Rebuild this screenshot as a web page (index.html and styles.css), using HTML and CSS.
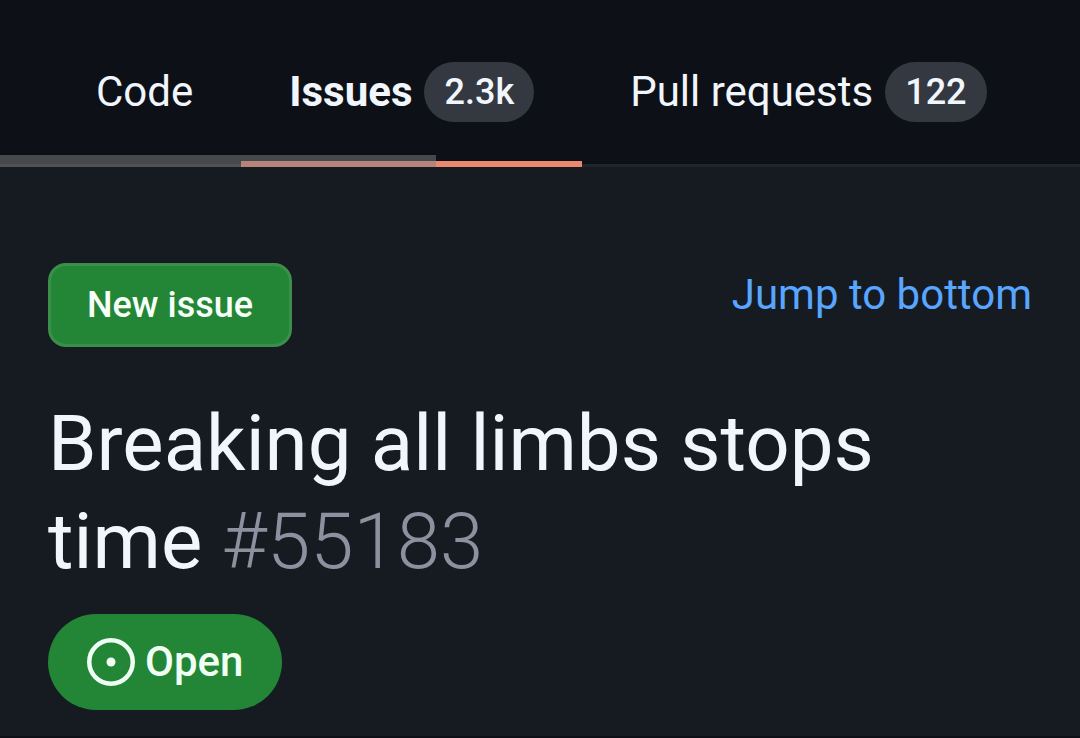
FILE: index.html
```html
<!DOCTYPE html>
<html lang="en">
<head>
  <meta charset="UTF-8" />
  <meta name="viewport" content="width=device-width, initial-scale=1.0" />
  <title>Breaking all limbs stops time #55183</title>
  <link rel="stylesheet" href="styles.css">
</head>
<body>
  <header class="repo-header">
    <nav class="tabs" aria-label="Repository">
      <a class="tab" href="#code">Code</a>
      <a class="tab selected" href="#issues" aria-current="page">Issues <span class="counter">2.3k</span></a>
      <a class="tab" href="#pulls">Pull requests <span class="counter">122</span></a>
    </nav>
    <div class="scroll-thumb"></div>
  </header>

  <main class="issue">
    <div class="actions">
      <button class="new-issue" type="button">New issue</button>
      <a class="jump" href="#bottom">Jump to bottom</a>
    </div>
    <h1 class="title">Breaking all limbs stops time <span class="number">#55183</span></h1>
    <div class="state">
      <svg class="state-icon" viewBox="0 0 16 16" aria-hidden="true">
        <circle cx="8" cy="8" r="7.25" fill="none" stroke="currentColor" stroke-width="1.5" />
        <circle cx="8" cy="8" r="1.5" fill="currentColor" />
      </svg>
      Open
    </div>
  </main>
  <div class="bottom" id="bottom"></div>
</body>
</html>
```

FILE: styles.css
```css
* {
  box-sizing: border-box;
}
body {
  margin: 0;
  min-height: 100vh;
  background: #161b22;
  color: #f0f6fc;
  font-family: Roboto, sans-serif;
  font-size: 42px;
  display: flex;
  flex-direction: column;
}
a {
  text-decoration: none;
}
.repo-header {
  position: relative;
  background: #0d1117;
  border-bottom: 3px solid #21262d;
}
.tabs {
  display: flex;
  padding: 18px 48px 0;
  margin-bottom: -3px;
  position: relative;
}
.tab {
  display: flex;
  align-items: center;
  gap: 12px;
  height: 149px;
  padding: 4px 48px 0;
  border-bottom: 6px solid transparent;
  color: #f0f6fc;
  white-space: nowrap;
}
.tab.selected {
  border-bottom-color: #ec8870;
  font-weight: 700;
}
.counter {
  height: 60px;
  padding: 0 20px;
  border-radius: 30px;
  background: #343941;
  font-size: 36px;
  font-weight: 500;
  line-height: 60px;
}
/* horizontal scroll indicator over the tab row */
.scroll-thumb {
  position: absolute;
  left: 0;
  bottom: -3px;
  width: 436px;
  height: 12px;
  background: rgba(128, 128, 128, 0.5);
}
.issue {
  padding: 96px 48px 26px;
}
.actions {
  display: flex;
  justify-content: space-between;
  align-items: flex-start;
}
.new-issue {
  height: 84px;
  padding: 0 36px;
  border: 3px solid #3b8f4b;
  border-radius: 18px;
  background: #238636;
  color: #f6fff8;
  font-family: inherit;
  font-size: 36px;
  font-weight: 500;
}
.jump {
  padding-top: 6px;
  color: #58a6ff;
  line-height: 52px;
}
.title {
  margin: 48px 0 23px;
  font-size: 78px;
  font-weight: 400;
  line-height: 98px;
}
.number {
  color: #8b919e;
  font-weight: 300;
}
.state {
  display: flex;
  align-items: center;
  gap: 10px;
  width: fit-content;
  height: 96px;
  padding: 0 39px;
  border-radius: 48px;
  background: #238636;
  color: #f0fff4;
  font-weight: 500;
  line-height: 48px;
}
.state-icon {
  width: 48px;
  height: 48px;
}
.bottom {
  flex: 1;
  background: #0d1117;
}
```
